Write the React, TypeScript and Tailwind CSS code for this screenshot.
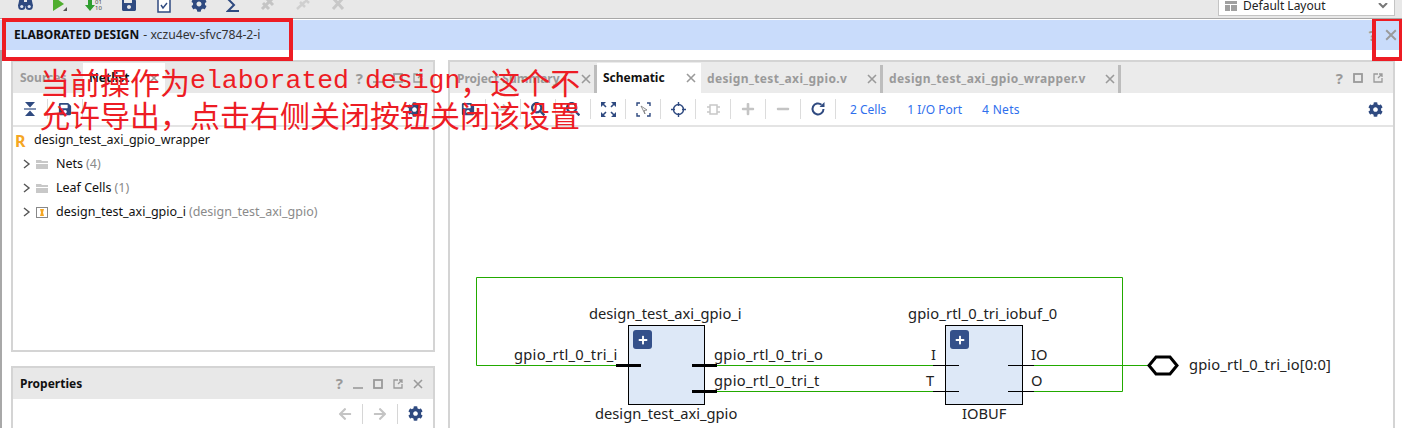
import React from "react";
import { FaCog, FaSave, FaArrowLeft, FaArrowRight, FaSearch, FaPlus, FaMinus } from "react-icons/fa";

const NAVY = "#2f4a80";
const GREY = "#9a9a9a";

const Close = ({ c = GREY, s = 10 }: { c?: string; s?: number }) => (
  <svg width={s} height={s} viewBox="0 0 10 10"><path d="M1 1l8 8M9 1l-8 8" stroke={c} strokeWidth="1.6" fill="none" /></svg>
);
const Square = () => (
  <svg width="10" height="10" viewBox="0 0 10 10"><rect x="1" y="1" width="8" height="8" fill="none" stroke={GREY} strokeWidth="1.8" /></svg>
);
const Float = () => (
  <svg width="10" height="10" viewBox="0 0 10 10"><path d="M5 1H1v8h8V5M6 1h3v3M9 1L5 5" fill="none" stroke={GREY} strokeWidth="1.3" /></svg>
);
const Min = () => (
  <svg width="10" height="10" viewBox="0 0 10 10"><path d="M0 9h10" stroke={GREY} strokeWidth="1.6" /></svg>
);
const Help = () => <span className="text-[15px] leading-none font-bold text-[#9a9a9a]">?</span>;

const Sep = () => <div className="w-px h-[20px] bg-[#d6d6d6]" />;

const TopIcon = ({ children }: { children: React.ReactNode }) => (
  <div className="w-[34.7px] h-[19px] flex items-start justify-center -mt-[4px]">{children}</div>
);

const Bar = ({ children }: { children: React.ReactNode }) => (
  <div className="w-[35px] flex items-center justify-center border-r border-[#dcdcdc] h-[20px]">{children}</div>
);

const Label = ({ x, y, cls = "", children }: { x: number; y: number; cls?: string; children: React.ReactNode }) => (
  <span className={"absolute text-[14.7px] leading-[18px] text-[#222] whitespace-nowrap " + cls} style={{ left: x - 450, top: y - 127 - 10 }}>
    {children}
  </span>
);

const PlusBtn = () => (
  <div className="w-[19px] h-[19px] mt-[4px] ml-[4px] rounded-[3px] bg-[#34508a] flex items-center justify-center">
    <FaPlus size={10} color="#fff" />
  </div>
);

const Block = ({ x, w }: { x: number; w: number }) => (
  <div
    className="absolute top-[198px] h-[80px] border border-black bg-[#dde8f7]"
    style={{ left: x - 450, width: w }}
  >
    <PlusBtn />
  </div>
);

const Chevron = () => (
  <svg width="8" height="10" viewBox="0 0 8 10" className="mr-[5px]"><path d="M1 1l5 4-5 4" stroke="#555" strokeWidth="1.4" fill="none" /></svg>
);
const Folder = () => (
  <svg width="12" height="10" viewBox="0 0 12 10" className="mr-[8px]"><path d="M0 1h5l1 1h6v2H0zM0 5h12v5H0z" fill="#c8c8c8" /></svg>
);

export default function App() {
  return (
    <div
      className="relative w-[1402px] h-[428px] overflow-hidden bg-white flex flex-col text-[12px]"
      style={{ fontFamily: '"Noto Sans","Noto Sans CJK SC",sans-serif' }}
    >
      {/* Top toolbar */}
      <div className="h-[19px] shrink-0 bg-[#e8e8e8] border-b border-[#a8a8a8] flex items-start pl-[8px]">
        <TopIcon>
          <svg width="15" height="15" viewBox="0 0 15 15">
            <path d="M2 0h4v6h3V0h4l2 10H0z" fill={NAVY} />
            <circle cx="3.8" cy="10.5" r="3.6" fill={NAVY} />
            <circle cx="11.2" cy="10.5" r="3.6" fill={NAVY} />
            <circle cx="3.8" cy="10.5" r="1.6" fill="#dfe6f2" />
            <circle cx="11.2" cy="10.5" r="1.6" fill="#dfe6f2" />
          </svg>
        </TopIcon>
        <TopIcon>
          <svg width="16" height="19" viewBox="0 0 16 19">
            <path d="M1 0l11 8-11 7z" fill="#4fae2e" />
            <path d="M15 11v4h-4z" fill="#555" />
          </svg>
        </TopIcon>
        <TopIcon>
          <svg width="20" height="18" viewBox="0 0 20 18">
            <path d="M3 0h4v9h3l-5 6-5-6h3z" fill="#2f9e2f" />
            <text x="10" y="8" fontSize="6" fill="#444">01</text>
            <text x="10" y="14" fontSize="6" fill="#444">10</text>
          </svg>
        </TopIcon>
        <TopIcon><FaSave size={16} color={NAVY} /></TopIcon>
        <TopIcon>
          <svg width="14" height="17" viewBox="0 0 14 17">
            <rect x="1" y="2" width="12" height="14" fill="#fff" stroke={NAVY} strokeWidth="1.5" />
            <path d="M4 9l2 3 4-5" stroke={NAVY} strokeWidth="1.4" fill="none" />
          </svg>
        </TopIcon>
        <TopIcon><FaCog size={16} color={NAVY} /></TopIcon>
        <TopIcon>
          <svg width="14" height="17" viewBox="0 0 14 17"><path d="M13 3H2l6 6-6 6h11" fill="none" stroke={NAVY} strokeWidth="2" /></svg>
        </TopIcon>
        <TopIcon>
          <svg width="16" height="15" viewBox="0 0 16 15"><path d="M2 13L13 2M3 7l6 6M6 2l7 7" stroke="#c4c4c4" strokeWidth="3" fill="none" /></svg>
        </TopIcon>
        <TopIcon>
          <svg width="16" height="15" viewBox="0 0 16 15"><path d="M2 13L14 2M5 6l5 5M9 2l5 5" stroke="#cfcfcf" strokeWidth="2.5" fill="none" /></svg>
        </TopIcon>
        <TopIcon>
          <svg width="16" height="15" viewBox="0 0 16 15"><path d="M3 2l10 11M13 2L3 13" stroke="#c8c8c8" strokeWidth="3" fill="none" /></svg>
        </TopIcon>
        <div className="ml-auto mr-[7px] w-[177px] h-[16px] bg-white border border-[#c4c4c4] border-t-0 flex items-center pl-[6px] pr-[5px]">
          <svg width="12" height="10" viewBox="0 0 12 10" className="mr-[6px] -mt-[4px]">
            <path d="M0 0h12v3H0zM0 4h5v6H0zM6 4h6v6H6z" fill="#a0a0a0" />
          </svg>
          <span className="text-[12px] text-[#222] leading-[14px] -mt-[3px]">Default Layout</span>
          <svg width="10" height="6" viewBox="0 0 10 6" className="ml-auto mr-[1px] -mt-[4px]"><path d="M1 0l4 4 4-4" stroke="#777" strokeWidth="2" fill="none" /></svg>
        </div>
      </div>

      {/* Banner */}
      <div className="h-[30px] shrink-0 bg-[#c9dcfb] flex items-center pl-[14px] pr-[5px] mt-px">
        <span className="font-bold text-[#111] text-[12px]">ELABORATED DESIGN</span>
        <span className="text-[#333] text-[12.2px] ml-[4px]">- xczu4ev-sfvc784-2-i</span>
        <div className="ml-auto flex items-center gap-[9px]">
          <Help />
          <Close s={12} />
        </div>
      </div>

      {/* Work area */}
      <div className="flex-1 min-h-0 flex border-l-2 border-[#a8a8a8] pt-[10px] pl-[9px] pr-[7px]">
        {/* Left column */}
        <div className="w-[424px] shrink-0 flex flex-col">
          <div className="h-[292px] shrink-0 border-[2px] border-[#d4d4d4] flex flex-col">
            <div className="h-[31px] shrink-0 bg-[#e8e8e8] flex items-end">
              <div className="w-[70px] h-[30px] flex items-center pl-[7px] font-bold text-[#9a9a9a]">Sources</div>
              <div className="w-[82px] h-[30px] bg-white flex items-center pl-[6px] font-bold text-[#111]">
                <span>Netlist</span>
                <span className="ml-auto mr-[6px]"><Close /></span>
              </div>
              <div className="ml-auto h-[30px] flex items-center gap-[10px] pr-[10px]">
                <Help /><Min /><Square /><Float />
              </div>
            </div>
            <div className="h-[34px] shrink-0 flex items-center border-b-2 border-[#e4e4e4] bg-white">
              <div className="w-[35px] flex justify-center border-r border-[#dcdcdc] h-[20px] items-center">
                <svg width="12" height="14" viewBox="0 0 12 14"><path d="M1 0h10L6 5.5zM1 14h10L6 8.5z" fill={NAVY} /><path d="M0 7h12" stroke={NAVY} strokeWidth="1.2" /></svg>
              </div>
              <div className="w-[35px] flex justify-center border-r border-[#dcdcdc] h-[20px] items-center"><FaSave size={14} color={NAVY} /></div>
              <div className="ml-auto mr-[11px]"><FaCog size={15} color={NAVY} /></div>
            </div>
            <div className="flex-1 bg-white pt-[2px] text-[12.5px] text-[#111]">
              <div className="h-[23px] flex items-center pl-[2px]">
                <span className="w-[19px] font-bold text-[16px] text-[#f5a623]">R</span>
                <span>design_test_axi_gpio_wrapper</span>
              </div>
              <div className="h-[24px] flex items-center pl-[10px]">
                <Chevron /><Folder />
                <span>Nets</span><span className="text-[#8a8a8a] ml-[3px]">(4)</span>
              </div>
              <div className="h-[24px] flex items-center pl-[10px]">
                <Chevron /><Folder />
                <span>Leaf Cells</span><span className="text-[#8a8a8a] ml-[3px]">(1)</span>
              </div>
              <div className="h-[24px] flex items-center pl-[10px]">
                <Chevron />
                <svg width="12" height="11" viewBox="0 0 12 11" className="mr-[8px]">
                  <rect x="0.5" y="0.5" width="11" height="10" fill="#fff" stroke="#888" />
                  <path d="M4 2h4L7 5.5 8 9H4l1-3.5z" fill="#f5a623" />
                </svg>
                <span>design_test_axi_gpio_i</span>
                <span className="text-[#8a8a8a] ml-[3px]">(design_test_axi_gpio)</span>
              </div>
            </div>
          </div>

          <div className="mt-[14px] flex-1 border-[2px] border-b-0 border-[#d4d4d4] flex flex-col">
            <div className="h-[31px] shrink-0 bg-[#e8e8e8] flex items-center pl-[7px] pr-[10px]">
              <span className="font-bold text-[#111]">Properties</span>
              <div className="ml-auto flex items-center gap-[10px]">
                <Help /><Min /><Square /><Float /><Close />
              </div>
            </div>
            <div className="flex-1 bg-white flex items-center justify-end pr-[10px] gap-[10px]">
              <FaArrowLeft size={14} color="#c4c4c4" />
              <Sep />
              <FaArrowRight size={14} color="#c4c4c4" />
              <Sep />
              <FaCog size={15} color={NAVY} />
            </div>
          </div>
        </div>

        {/* Right panel */}
        <div className="ml-[13px] flex-1 min-w-0 border-[2px] border-b-0 border-[#d4d4d4] flex flex-col">
          <div className="h-[31px] shrink-0 bg-[#ebebeb] flex items-end font-bold text-[12px] text-[#9a9a9a]">
            <div className="w-[147px] h-[28px] flex items-center pl-[7px] border-r-[3px] border-[#bdbdbd]">
              <span>Project Summary</span>
              <span className="ml-auto mr-[3px]"><Close /></span>
            </div>
            <div className="w-[104px] h-[30px] bg-white flex items-center pl-[6px] text-[#111]">
              <span>Schematic</span>
              <span className="ml-auto mr-[5px]"><Close /></span>
            </div>
            <div className="w-[182px] h-[28px] flex items-center pl-[6px] border-r-[3px] border-[#bdbdbd]">
              <span className="tracking-[0.36px]">design_test_axi_gpio.v</span>
              <span className="ml-auto mr-[3px]"><Close /></span>
            </div>
            <div className="w-[238px] h-[28px] flex items-center pl-[6px] border-r-[3px] border-[#bdbdbd]">
              <span className="tracking-[0.37px]">design_test_axi_gpio_wrapper.v</span>
              <span className="ml-auto mr-[3px]"><Close /></span>
            </div>
            <div className="ml-auto h-[30px] flex items-center gap-[10px] pr-[10px]">
              <Help /><Square /><Float />
            </div>
          </div>
          <div className="h-[34px] shrink-0 flex items-center border-b-2 border-[#e4e4e4] bg-white pl-[1px] text-[12px] text-[#2f6fed]">
            <Bar><FaSave size={14} color={NAVY} /></Bar>
            <Bar><FaArrowRight size={13} color="#c4c4c4" /></Bar>
            <Bar><FaSearch size={14} color={NAVY} /></Bar>
            <Bar><FaSearch size={14} color={NAVY} /></Bar>
            <Bar>
              <svg width="15" height="15" viewBox="0 0 15 15"><path d="M0 0h5L0 5zM15 0v5l-5-5zM0 15v-5l5 5zM15 15h-5l5-5z" fill={NAVY} /><path d="M2 2l3 3M13 2l-3 3M2 13l3-3M13 13l-3-3" stroke={NAVY} strokeWidth="1.6" /></svg>
            </Bar>
            <Bar>
              <svg width="15" height="15" viewBox="0 0 15 15"><path d="M1 4V1h3M11 1h3v3M14 11v3h-3M4 14H1v-3" fill="none" stroke={NAVY} strokeWidth="1.4" /><path d="M5 4l6 4-3 .5L9 12 5 4z" fill="#fff" stroke="#777" strokeWidth="0.8" /></svg>
            </Bar>
            <Bar>
              <svg width="15" height="15" viewBox="0 0 15 15"><circle cx="7.5" cy="7.5" r="5" fill="none" stroke={NAVY} strokeWidth="1.4" /><path d="M7.5 0v4M7.5 11v4M0 7.5h4M11 7.5h4" stroke={NAVY} strokeWidth="1.4" /></svg>
            </Bar>
            <Bar>
              <svg width="15" height="15" viewBox="0 0 15 15"><path d="M4 3h7v9H4zM1 5h3M1 10h3M11 5h3M11 10h3" fill="none" stroke="#c8c8c8" strokeWidth="1.5" /></svg>
            </Bar>
            <Bar><FaPlus size={14} color="#c4c4c4" /></Bar>
            <Bar><FaMinus size={14} color="#c4c4c4" /></Bar>
            <Bar>
              <svg width="16" height="16" viewBox="0 0 16 16"><path d="M13.5 8A5.5 5.5 0 1 1 11.5 3.7" fill="none" stroke={NAVY} strokeWidth="2" /><path d="M14.5 1v5h-5z" fill={NAVY} /></svg>
            </Bar>
            <span className="ml-[14px] mt-px">2 Cells</span>
            <span className="ml-[21px] mt-px">1 I/O Port</span>
            <span className="ml-[20px] mt-px tracking-[0.3px]">4 Nets</span>
            <span className="ml-auto mr-[10px]"><FaCog size={15} color={NAVY} /></span>
          </div>

          {/* Schematic canvas */}
          <div className="relative flex-1 bg-white">
            <svg width="946" height="301" viewBox="450 127 946 301" className="absolute left-0 top-0">
              <path d="M616 365.5H476.5V277.5H1122.5V391.5H1034" fill="none" stroke="#22aa00" strokeWidth="1" />
              <path d="M717 365.5H933M717 391.5H933M1034 365.5H1148" fill="none" stroke="#22aa00" strokeWidth="1" />
            </svg>
            <Block x={628} w={77} />
            <Block x={945} w={78} />
            <svg width="946" height="301" viewBox="450 127 946 301" className="absolute left-0 top-0">
              <path d="M616 365.5h25M692 365.5h25M692 391.5h25" stroke="#000" strokeWidth="3" />
              <path d="M933 365.5h26M933 391.5h26M1008 365.5h26M1008 391.5h26" stroke="#000" strokeWidth="1" />
              <path d="M1149 365.5L1156 357H1170L1177 365.5L1170 374H1156Z" fill="#fff" stroke="#000" strokeWidth="3" />
            </svg>
            <Label x={589} y={314}>design_test_axi_gpio_i</Label>
            <Label x={514} y={355} cls="tracking-[0.27px]">gpio_rtl_0_tri_i</Label>
            <Label x={714} y={355} cls="tracking-[0.3px]">gpio_rtl_0_tri_o</Label>
            <Label x={714} y={381} cls="tracking-[0.3px]">gpio_rtl_0_tri_t</Label>
            <Label x={595} y={414}>design_test_axi_gpio</Label>
            <Label x={908} y={314} cls="tracking-[0.14px]">gpio_rtl_0_tri_iobuf_0</Label>
            <Label x={931} y={355}>I</Label>
            <Label x={926} y={381}>T</Label>
            <Label x={1031} y={355}>IO</Label>
            <Label x={1031} y={381}>O</Label>
            <Label x={962} y={414}>IOBUF</Label>
            <Label x={1189} y={365} cls="tracking-[0.15px]">gpio_rtl_0_tri_io[0:0]</Label>
          </div>
        </div>
      </div>

      {/* Annotation overlay */}
      <div className="absolute left-[2px] top-[18px] w-[291px] h-[43px] border-[4px] border-[#ed1c24]" />
      <div className="absolute left-[1372px] top-[19px] w-[30px] h-[42px] border-[4px] border-t-[2px] border-r-[3px] border-[#ed1c24]" />
      <div
        className="absolute left-[40px] top-[63px] w-[560px] text-[30px] text-[#ed1c24]"
        style={{ fontFamily: '"Noto Sans CJK SC","Liberation Mono",monospace' }}
      >
        <div className="h-[36px] flex items-center whitespace-nowrap leading-none">
          <span>当前操作为</span>
          <span style={{ fontFamily: '"Liberation Mono",monospace' }} className="text-[26.5px]">elaborated design</span>
          <span>，这个不</span>
        </div>
        <div className="h-[30px] flex items-center whitespace-nowrap leading-none">允许导出，点击右侧关闭按钮关闭该设置</div>
      </div>
    </div>
  );
}
